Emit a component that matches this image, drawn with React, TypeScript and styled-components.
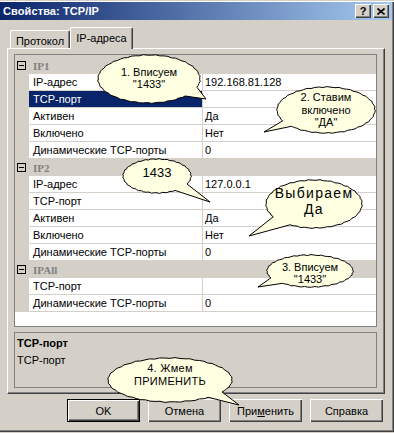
import React from "react";
import styled, { createGlobalStyle } from "styled-components";

const GlobalStyle = createGlobalStyle`
  html, body {
    margin: 0;
    padding: 0;
    background: #d4d0c8;
  }
  body {
    font-family: "Liberation Sans", Arial, sans-serif;
    font-size: 11px;
    color: #000;
  }
`;

const raised = `
  box-shadow: inset 1px 1px #fff, inset -1px -1px #404040, inset -2px -2px #808080;
`;

const Window = styled.div`
  position: relative;
  width: 394px;
  height: 432px;
  box-sizing: border-box;
  padding: 2px 2px 0 0;
  background: #d4d0c8;
  box-shadow: inset 0 1px #d4d0c8, inset 0 2px #fff, inset -1px -1px #404040,
    inset -2px -2px #808080;
  overflow: hidden;
`;

const TitleBar = styled.div`
  height: 18px;
  display: flex;
  align-items: center;
  justify-content: space-between;
  padding: 0 3px 0 3px;
  background: linear-gradient(to right, #0a246a, #a6caf0);
`;

const Caption = styled.span`
  color: #fff;
  font-weight: bold;
  font-size: 11px;
  letter-spacing: 0.1px;
`;

const CaptionButtons = styled.div`
  display: flex;
  gap: 2px;
`;

const CaptionButton = styled.div`
  width: 16px;
  height: 14px;
  box-sizing: border-box;
  background: #d4d0c8;
  display: flex;
  align-items: center;
  justify-content: center;
  font-weight: bold;
  font-size: 11px;
  ${raised}
`;

const Body = styled.div`
  padding: 7px 0 0 7px;
`;

const TabStrip = styled.div`
  display: flex;
  align-items: flex-end;
  height: 21px;
  padding-left: 3px;
  position: relative;
  z-index: 1;
`;

const Tab = styled.div<{ $active?: boolean }>`
  box-sizing: border-box;
  width: ${(p) => (p.$active ? 63 : 60)}px;
  height: ${(p) => (p.$active ? 22 : 18)}px;
  margin-bottom: ${(p) => (p.$active ? -1 : 0)}px;
  padding-top: 4px;
  text-align: center;
  background: #d4d0c8;
  border-top: 1px solid #fff;
  border-left: 1px solid #fff;
  border-right: 1px solid #404040;
  border-radius: 2px 2px 0 0;
  box-shadow: inset -1px 0 #808080;
  font-size: 11px;
  line-height: 13px;
`;

const Panel = styled.div`
  width: 378px;
  height: 346px;
  box-sizing: border-box;
  border-top: 1px solid #fff;
  border-left: 1px solid #fff;
  border-right: 1px solid #404040;
  border-bottom: 1px solid #404040;
  box-shadow: inset -1px -1px #808080;
  padding: 5px 7px 5px 6px;
  display: flex;
  flex-direction: column;
  gap: 5px;
`;

const Grid = styled.div`
  height: 273px;
  box-sizing: border-box;
  border: 1px solid #808080;
  background: #fff;
  overflow: hidden;
`;

const GroupHeader = styled.div`
  height: 17px;
  display: flex;
  align-items: center;
  background: #d4d0c8;
  &:first-child {
    height: 19px;
    padding-top: 2px;
    box-sizing: border-box;
  }
`;

const MinusBox = styled.div`
  width: 9px;
  height: 9px;
  box-sizing: border-box;
  margin-left: 2px;
  border: 1px solid #000;
  display: flex;
  align-items: center;
  justify-content: center;
  &::after {
    content: "";
    width: 5px;
    height: 1px;
    background: #000;
  }
`;

const GroupLabel = styled.span`
  margin-left: 7px;
  font-family: "Liberation Serif", "Times New Roman", serif;
  font-weight: bold;
  font-size: 11px;
  color: #808080;
`;

const PropRow = styled.div`
  display: grid;
  grid-template-columns: 14px 174px 1fr;
  height: 17px;
`;

const Gutter = styled.div`
  background: #d4d0c8;
`;

const NameCell = styled.div<{ $selected?: boolean }>`
  box-sizing: border-box;
  padding-left: 4px;
  display: flex;
  align-items: center;
  white-space: nowrap;
  border-right: 1px solid #d4d0c8;
  border-bottom: 1px solid #d4d0c8;
  background: ${(p) => (p.$selected ? "#0a246a" : "#fff")};
  color: ${(p) => (p.$selected ? "#fff" : "#000")};
`;

const ValueCell = styled.div`
  box-sizing: border-box;
  padding-left: 2px;
  display: flex;
  align-items: center;
  white-space: nowrap;
  border-bottom: 1px solid #d4d0c8;
`;

const Description = styled.div`
  height: 56px;
  box-sizing: border-box;
  border: 1px solid #808080;
  padding: 4px 2px;
`;

const DescTitle = styled.div`
  font-weight: bold;
  line-height: 13px;
  margin-bottom: 4px;
`;

const DescText = styled.div`
  line-height: 13px;
`;

const ButtonRow = styled.div`
  width: 378px;
  margin-top: 5px;
  padding-right: 2px;
  box-sizing: border-box;
  display: flex;
  justify-content: flex-end;
  gap: 8px;
`;

const Button = styled.div<{ $default?: boolean }>`
  width: 73px;
  height: 23px;
  box-sizing: border-box;
  display: flex;
  align-items: center;
  justify-content: center;
  background: #d4d0c8;
  font-size: 11px;
  border: ${(p) => (p.$default ? "1px solid #000" : "none")};
  ${raised}
`;

const Accel = styled.span`
  text-decoration: underline;
`;

const BalloonBox = styled.div<{ $x: number; $y: number; $w: number; $h: number }>`
  position: absolute;
  left: ${(p) => p.$x}px;
  top: ${(p) => p.$y}px;
  width: ${(p) => p.$w}px;
  height: ${(p) => p.$h}px;
  z-index: 5;
`;

const BalloonShape = styled.svg`
  position: absolute;
  left: 0;
  top: 0;
  overflow: visible;
`;

const BalloonText = styled.div<{ $size: number; $lh: number; $ls: number; $dy: number }>`
  position: relative;
  height: 100%;
  display: flex;
  flex-direction: column;
  align-items: center;
  justify-content: center;
  font-family: "Liberation Sans", Arial, sans-serif;
  font-size: ${(p) => p.$size}px;
  line-height: ${(p) => p.$lh}px;
  letter-spacing: ${(p) => p.$ls}px;
  transform: translateY(${(p) => p.$dy}px);
  white-space: nowrap;
`;

type BalloonProps = {
  cx: number;
  cy: number;
  rx: number;
  ry: number;
  a1: number;
  a2: number;
  tx: number;
  ty: number;
  lines: string[];
  size: number;
  lh: number;
  ls?: number;
  dy?: number;
};

function balloonPath(rx: number, ry: number, a1: number, a2: number, tx: number, ty: number) {
  const pts: [number, number][] = [];
  const steps = 72;
  const end = a1 + 360;
  for (let i = 0; i <= steps; i++) {
    const a = ((a2 + ((end - a2) * i) / steps) * Math.PI) / 180;
    const j = i === 0 || i === steps ? 0 : Math.sin(i * 2.3) * 0.45;
    pts.push([rx + (rx + j) * Math.cos(a), ry + (ry + j) * Math.sin(a)]);
  }
  pts.push([tx, ty]);
  return "M" + pts.map(([x, y]) => `${x.toFixed(1)},${y.toFixed(1)}`).join("L") + "Z";
}

function Balloon({ cx, cy, rx, ry, a1, a2, tx, ty, lines, size, lh, ls = 0, dy = 0 }: BalloonProps) {
  const x = cx - rx;
  const y = cy - ry;
  return (
    <BalloonBox $x={x} $y={y} $w={rx * 2} $h={ry * 2}>
      <BalloonShape width={rx * 2} height={ry * 2}>
        <path
          d={balloonPath(rx, ry, a1, a2, tx - x, ty - y)}
          fill="#ffffe1"
          stroke="#000"
          strokeWidth={1}
          strokeLinejoin="round"
        />
      </BalloonShape>
      <BalloonText $size={size} $lh={lh} $ls={ls} $dy={dy}>
        {lines.map((l) => (
          <span key={l}>{l}</span>
        ))}
      </BalloonText>
    </BalloonBox>
  );
}

type Prop = { name: string; value: string; selected?: boolean };

const groups: { name: string; rows: Prop[] }[] = [
  {
    name: "IP1",
    rows: [
      { name: "IP-адрес", value: "192.168.81.128" },
      { name: "TCP-порт", value: "", selected: true },
      { name: "Активен", value: "Да" },
      { name: "Включено", value: "Нет" },
      { name: "Динамические TCP-порты", value: "0" },
    ],
  },
  {
    name: "IP2",
    rows: [
      { name: "IP-адрес", value: "127.0.0.1" },
      { name: "TCP-порт", value: "" },
      { name: "Активен", value: "Да" },
      { name: "Включено", value: "Нет" },
      { name: "Динамические TCP-порты", value: "0" },
    ],
  },
  {
    name: "IPAll",
    rows: [
      { name: "TCP-порт", value: "" },
      { name: "Динамические TCP-порты", value: "0" },
    ],
  },
];

const balloons: BalloonProps[] = [
  { cx: 149, cy: 79, rx: 51, ry: 24, a1: 20, a2: 45, tx: 206, ty: 99, lines: ["1. Вписуем", '"1433"'], size: 11, lh: 12, dy: -1 },
  { cx: 326, cy: 110, rx: 49, ry: 23, a1: 135, a2: 152, tx: 264, ty: 132, lines: ["2. Ставим", "включено", '"ДА"'], size: 11, lh: 12.5 },
  { cx: 157, cy: 176, rx: 34, ry: 17, a1: 28, a2: 58, tx: 210, ty: 202, lines: ["1433"], size: 13, lh: 15, dy: -4 },
  { cx: 314, cy: 204, rx: 48, ry: 24, a1: 120, a2: 148, tx: 249, ty: 236, lines: ["Выбираем", "Да"], size: 14, lh: 16, ls: 1.3, dy: -3 },
  { cx: 310, cy: 271, rx: 43, ry: 16, a1: 130, a2: 155, tx: 258, ty: 287, lines: ["3. Вписуем", '"1433"'], size: 11, lh: 12.5, dy: 2 },
  { cx: 170, cy: 380, rx: 62, ry: 22, a1: 33, a2: 52, tx: 239, ty: 405, lines: ["4. Жмем", "ПРИМЕНИТЬ"], size: 11, lh: 13, ls: 0.3, dy: -5 },
];

export default function App() {
  return (
    <>
      <GlobalStyle />
      <Window>
        <TitleBar>
          <Caption>Свойства: TCP/IP</Caption>
          <CaptionButtons>
            <CaptionButton>?</CaptionButton>
            <CaptionButton>
              <svg width="8" height="7" viewBox="0 0 8 7">
                <path d="M0.5 0.5 L7.5 6.5 M7.5 0.5 L0.5 6.5" stroke="#000" strokeWidth="1.6" />
              </svg>
            </CaptionButton>
          </CaptionButtons>
        </TitleBar>
        <Body>
          <TabStrip>
            <Tab>Протокол</Tab>
            <Tab $active>IP-адреса</Tab>
          </TabStrip>
          <Panel>
            <Grid>
              {groups.map((g) => (
                <React.Fragment key={g.name}>
                  <GroupHeader>
                    <MinusBox />
                    <GroupLabel>{g.name}</GroupLabel>
                  </GroupHeader>
                  {g.rows.map((r) => (
                    <PropRow key={g.name + r.name}>
                      <Gutter />
                      <NameCell $selected={r.selected}>{r.name}</NameCell>
                      <ValueCell>{r.value}</ValueCell>
                    </PropRow>
                  ))}
                </React.Fragment>
              ))}
            </Grid>
            <Description>
              <DescTitle>TCP-порт</DescTitle>
              <DescText>TCP-порт</DescText>
            </Description>
          </Panel>
          <ButtonRow>
            <Button $default>OK</Button>
            <Button>Отмена</Button>
            <Button>
              При<Accel>м</Accel>енить
            </Button>
            <Button>Справка</Button>
          </ButtonRow>
        </Body>
        {balloons.map((b) => (
          <Balloon key={b.lines.join()} {...b} />
        ))}
      </Window>
    </>
  );
}
